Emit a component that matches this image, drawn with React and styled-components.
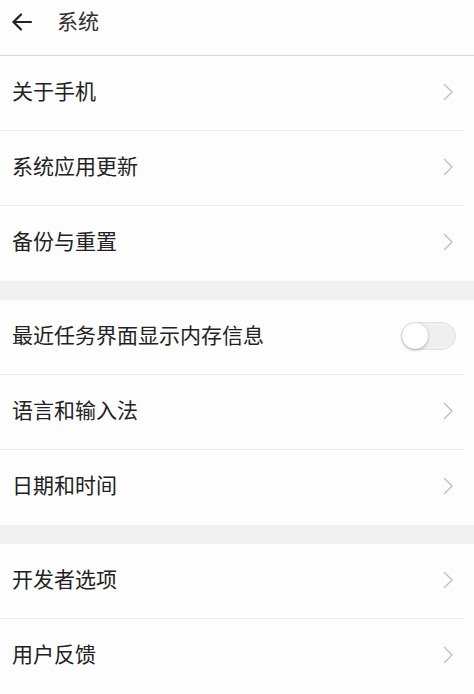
import React, { useState } from 'react';
import styled, { createGlobalStyle } from 'styled-components';

const GlobalStyle = createGlobalStyle`
  body {
    margin: 0;
    background: #fdfdfd;
    font-family: "Noto Sans CJK SC", "Noto Sans", sans-serif;
  }
`;

const sections = [
  [
    { label: '关于手机' },
    { label: '系统应用更新' },
    { label: '备份与重置' },
  ],
  [
    { label: '最近任务界面显示内存信息', toggle: true },
    { label: '语言和输入法' },
    { label: '日期和时间' },
  ],
  [
    { label: '开发者选项' },
    { label: '用户反馈' },
  ],
];

const App = () => {
  const [memInfo, setMemInfo] = useState(false);

  return (
    <Page>
      <GlobalStyle />
      <Header>
        <BackButton aria-label="返回">
          <svg width="24" height="24" viewBox="0 0 24 24" fill="none" stroke="#222" strokeWidth="2.2" strokeLinecap="round" strokeLinejoin="round">
            <path d="M21 12H3.5" />
            <path d="M11 4.5L3.5 12l7.5 7.5" />
          </svg>
        </BackButton>
        <Title>系统</Title>
      </Header>

      {sections.map((items, i) => (
        <Section key={i} first={i === 0}>
          {items.map((item, j) => (
            <Row key={item.label} last={j === items.length - 1}>
              <Label>{item.label}</Label>
              {item.toggle ? (
                <Switch on={memInfo} onClick={() => setMemInfo(!memInfo)}>
                  <Knob on={memInfo} />
                </Switch>
              ) : (
                <svg width="12" height="20" viewBox="0 0 12 20" fill="none" stroke="#bcbcbc" strokeWidth="1.3" strokeLinecap="round" strokeLinejoin="round">
                  <path d="M2.5 2.5l7.5 7.5-7.5 7.5" />
                </svg>
              )}
            </Row>
          ))}
        </Section>
      ))}
    </Page>
  );
};

export default App;

//PAGE
const Page = styled.div`
  width: 474px;
  height: 694px;
  overflow: hidden;
  background: #fdfdfd;
`;

const Header = styled.div`
  height: 56px;
  display: flex;
  align-items: center;
  border-bottom: 1px solid #d8d8d8;
  box-sizing: border-box;
  padding-left: 10px;
`;

const BackButton = styled.button`
  border: 0;
  background: none;
  padding: 0;
  display: flex;
  width: 26px;
  height: 24px;
  margin-top: -12px;
`;

const Title = styled.h1`
  margin: -14px 0 0 21px;
  font-size: 21px;
  line-height: 1.4;
  font-weight: 400;
  color: #333;
`;

const Section = styled.div`
  background: #fdfdfd;
  border-top: ${p => (p.first ? 'none' : '19px solid #f1f1f1')};
`;

const Row = styled.div`
  height: 75px;
  box-sizing: border-box;
  display: flex;
  align-items: center;
  justify-content: space-between;
  padding: 0 20px 3px 12px;
  position: relative;

  &::after {
    content: '';
    display: ${p => (p.last ? 'none' : 'block')};
    position: absolute;
    left: 0;
    right: 10px;
    bottom: 0;
    height: 1px;
    background: #ececec;
  }
`;

const Label = styled.span`
  font-size: 21px;
  line-height: 1.4;
  margin-top: -3px;
  color: #222;
`;

const Switch = styled.div`
  width: 55px;
  height: 28px;
  border-radius: 14px;
  box-sizing: border-box;
  background: ${p => (p.on ? '#4caf50' : '#efefef')};
  border: 1px solid #e2e2e2;
  position: relative;
  margin-right: -2px;
  cursor: pointer;
`;

const Knob = styled.div`
  position: absolute;
  top: 0;
  left: ${p => (p.on ? '27px' : '0')};
  width: 26px;
  height: 26px;
  border-radius: 50%;
  background: #fff;
  box-shadow: 0 1px 3px rgba(0, 0, 0, 0.3);
`;
